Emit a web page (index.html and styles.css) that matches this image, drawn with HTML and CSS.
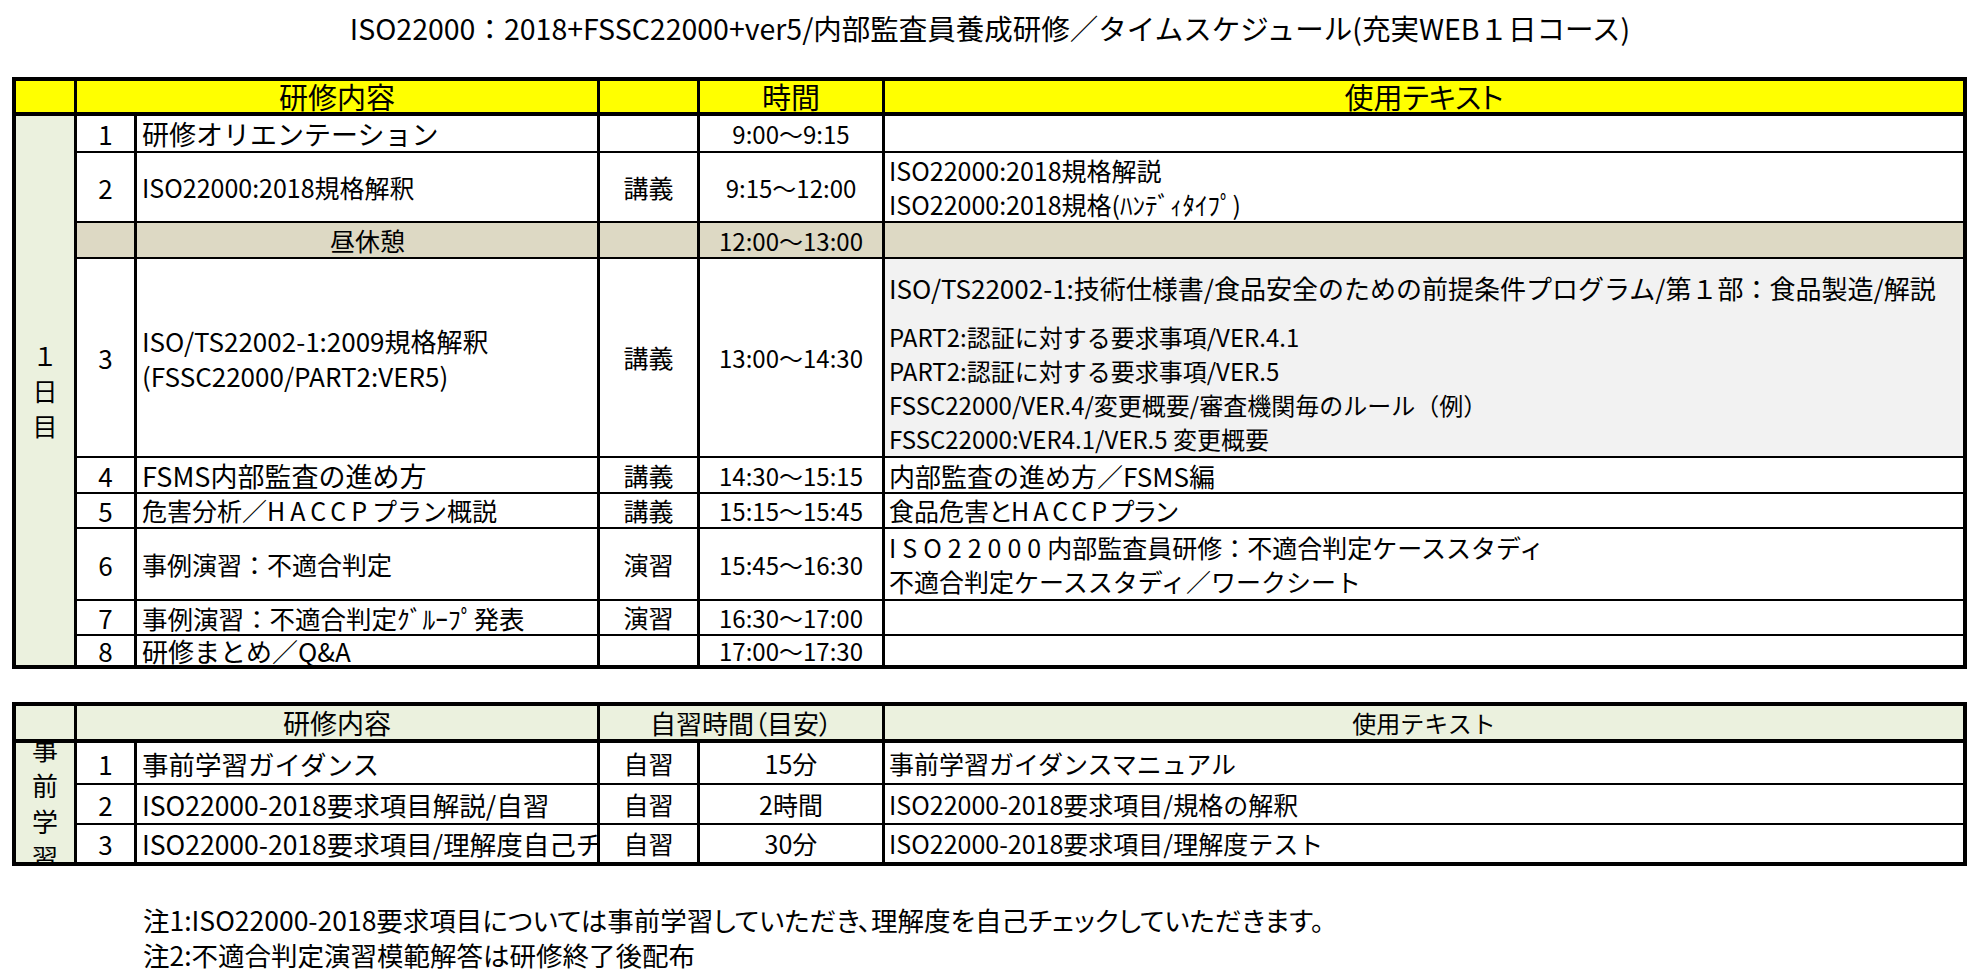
FILE: index.html
```html
<!DOCTYPE html>
<html lang="ja">
<head>
<meta charset="utf-8">
<title>タイムスケジュール</title>
<link rel="stylesheet" href="styles.css">
</head>
<body>
<div class="title">ISO22000：2018+FSSC22000+ver5/内部監査員養成研修／タイムスケジュール(充実WEB１日コース)</div>

<div class="sched s1">
  <div class="c hd yel"></div>
  <div class="c hd yel ctr span2 hbig">研修内容</div>
  <div class="c hd yel"></div>
  <div class="c hd yel ctr hbig">時間</div>
  <div class="c hd yel ctr hbig">使用テキスト</div>

  <div class="c grn day day1"><span>１</span><span>日</span><span>目</span></div>

  <div class="c ctr num">1</div>
  <div class="c cont f27">研修オリエンテーション</div>
  <div class="c ctr"></div>
  <div class="c ctr time">9:00～9:15</div>
  <div class="c txt"></div>

  <div class="c ctr num">2</div>
  <div class="c cont">ISO22000:2018規格解釈</div>
  <div class="c ctr typ">講義</div>
  <div class="c ctr time">9:15～12:00</div>
  <div class="c txt multi"><span>ISO22000:2018規格解説</span><span>ISO22000:2018規格(ﾊﾝﾃﾞｨﾀｲﾌﾟ)</span></div>

  <div class="c tan"></div>
  <div class="c tan ctr cont">昼休憩</div>
  <div class="c tan"></div>
  <div class="c tan ctr time">12:00～13:00</div>
  <div class="c tan"></div>

  <div class="c ctr num">3</div>
  <div class="c cont multi l35 f26"><span>ISO/TS22002-1:2009規格解釈</span><span>(FSSC22000/PART2:VER5)</span></div>
  <div class="c ctr typ">講義</div>
  <div class="c ctr time">13:00～14:30</div>
  <div class="c txt gry stack">
    <span class="first">ISO/TS22002-1:技術仕様書/食品安全のための前提条件プログラム/第１部：食品製造/解説</span>
    <span>PART2:認証に対する要求事項/VER.4.1</span>
    <span>PART2:認証に対する要求事項/VER.5</span>
    <span>FSSC22000/VER.4/変更概要/審査機関毎のルール（例）</span>
    <span>FSSC22000:VER4.1/VER.5 変更概要</span>
  </div>

  <div class="c ctr num">4</div>
  <div class="c cont f27">FSMS内部監査の進め方</div>
  <div class="c ctr typ">講義</div>
  <div class="c ctr time">14:30～15:15</div>
  <div class="c txt f26">内部監査の進め方／FSMS編</div>

  <div class="c ctr num">5</div>
  <div class="c cont">危害分析／<span class="wl5">HACCP</span>プラン概説</div>
  <div class="c ctr typ">講義</div>
  <div class="c ctr time">15:15～15:45</div>
  <div class="c txt"><span>食品危害</span><span class="pa">と</span><span class="wl4">HACCP</span><span class="pa">プラン</span></div>

  <div class="c ctr num">6</div>
  <div class="c cont">事例演習：不適合判定</div>
  <div class="c ctr typ">演習</div>
  <div class="c ctr time">15:45～16:30</div>
  <div class="c txt multi"><span><span class="wl6">ISO22000</span>内部監査員研修：不適合判定ケーススタディ</span><span>不適合判定ケーススタディ／ワークシート</span></div>

  <div class="c ctr num">7</div>
  <div class="c cont f255">事例演習：不適合判定ｸﾞﾙｰﾌﾟ発表</div>
  <div class="c ctr typ">演習</div>
  <div class="c ctr time">16:30～17:00</div>
  <div class="c txt"></div>

  <div class="c ctr num">8</div>
  <div class="c cont f26">研修まとめ／Q&amp;A</div>
  <div class="c ctr"></div>
  <div class="c ctr time">17:00～17:30</div>
  <div class="c txt"></div>
</div>

<div class="sched s2">
  <div class="c hd grn"></div>
  <div class="c hd grn ctr span2 h2a">研修内容</div>
  <div class="c hd grn ctr span2 h2b">自習時間（目安）</div>
  <div class="c hd grn ctr h2c">使用テキスト</div>

  <div class="c grn day day2"><span>事</span><span>前</span><span>学</span><span>習</span></div>

  <div class="c ctr num">1</div>
  <div class="c cont c2">事前学習ガイダンス</div>
  <div class="c ctr typ">自習</div>
  <div class="c ctr typ">15分</div>
  <div class="c txt">事前学習ガイダンスマニュアル</div>

  <div class="c ctr num">2</div>
  <div class="c cont c2">ISO22000-2018要求項目解説/自習</div>
  <div class="c ctr typ">自習</div>
  <div class="c ctr typ">2時間</div>
  <div class="c txt">ISO22000-2018要求項目/規格の解釈</div>

  <div class="c ctr num">3</div>
  <div class="c cont c2 clip">ISO22000-2018要求項目/理解度自己チェック</div>
  <div class="c ctr typ">自習</div>
  <div class="c ctr typ">30分</div>
  <div class="c txt">ISO22000-2018要求項目/理解度テスト</div>
</div>

<div class="notes">
  <p>注1:ISO22000-2018要求項目については事前学習していただき、理解度を自己チェックしていただきます。</p>
  <p>注2:不適合判定演習模範解答は研修終了後配布</p>
</div>
</body>
</html>
```

FILE: styles.css
```css
* { box-sizing: border-box; }

body {
  margin: 0;
  font-family: "Noto Sans CJK JP", "Noto Sans", sans-serif;
  color: #000;
  background: #fff;
}

.title {
  height: 77px;
  margin: 0;
  text-align: center;
  font-size: 28.5px;
  line-height: 56px;
}

.sched {
  display: grid;
  margin-left: 12px;
  width: 1955px;
  padding: 4px;
  background: #000;
  column-gap: 3px;
  row-gap: 2px;
  grid-template-columns: 58px 57px 460px 97px 182px 1fr;
}

.s1 {
  grid-template-rows: 33px 35px 68px 34px 197px 34px 33px 70px 33px 29px;
}

.s2 {
  margin-top: 33px;
  grid-template-rows: 35px 40px 38px 37px;
}

.c {
  background: #fff;
  display: flex;
  align-items: center;
  white-space: nowrap;
  min-width: 0;
  font-size: 25px;
  line-height: 29px;
  padding: 0 4px;
}

.clip { overflow: hidden; }

.hd {
  border-bottom: 2px solid #000;
  font-feature-settings: "palt";
}
.s1 .hd { align-items: flex-end; }

.yel { background: #ffff00; }
.grn { background: #ebf1de; }
.tan { background: #ddd9c4; }
.gry { background: #f2f2f2; }

.ctr { justify-content: center; }
.span2 { grid-column: span 2; }

.hbig { font-size: 29px; line-height: 31px; }
.h2a { font-size: 27px; }
.h2b { font-size: 26px; }
.h2c { font-size: 24px; font-feature-settings: normal; }

.day {
  grid-column: 1;
  flex-direction: column;
  justify-content: center;
  padding: 0;
}
.day1 { grid-row: 2 / 11; line-height: 35px; }
.day2 {
  grid-row: 2 / 5;
  line-height: 36px;
  font-size: 26px;
  overflow: hidden;
}

.num { font-size: 26px; }
.cont { padding-left: 5px; }
.c2 { font-size: 26.5px; }
.time { font-size: 24px; }
.typ { font-size: 25px; }
.txt { padding-left: 4px; }

.f255 { font-size: 25.5px; }
.f26 { font-size: 26px; }
.f27 { font-size: 27px; }

.pa { font-feature-settings: "palt"; }
.wl4 { letter-spacing: 4px; }
.wl5 { letter-spacing: 5px; }
.wl6 { letter-spacing: 6px; }

.multi {
  flex-direction: column;
  align-items: flex-start;
  justify-content: center;
  line-height: 34px;
}
.multi.l35 { line-height: 35px; }

.stack {
  flex-direction: column;
  align-items: flex-start;
  justify-content: flex-end;
  font-size: 24px;
  line-height: 34px;
}
.stack .first { margin-bottom: 15px; font-size: 26px; }

.notes {
  margin-top: 36px;
  padding-left: 143px;
  font-size: 26.5px;
  line-height: 35px;
  font-feature-settings: "palt";
}
.notes p { margin: 0; }
```
